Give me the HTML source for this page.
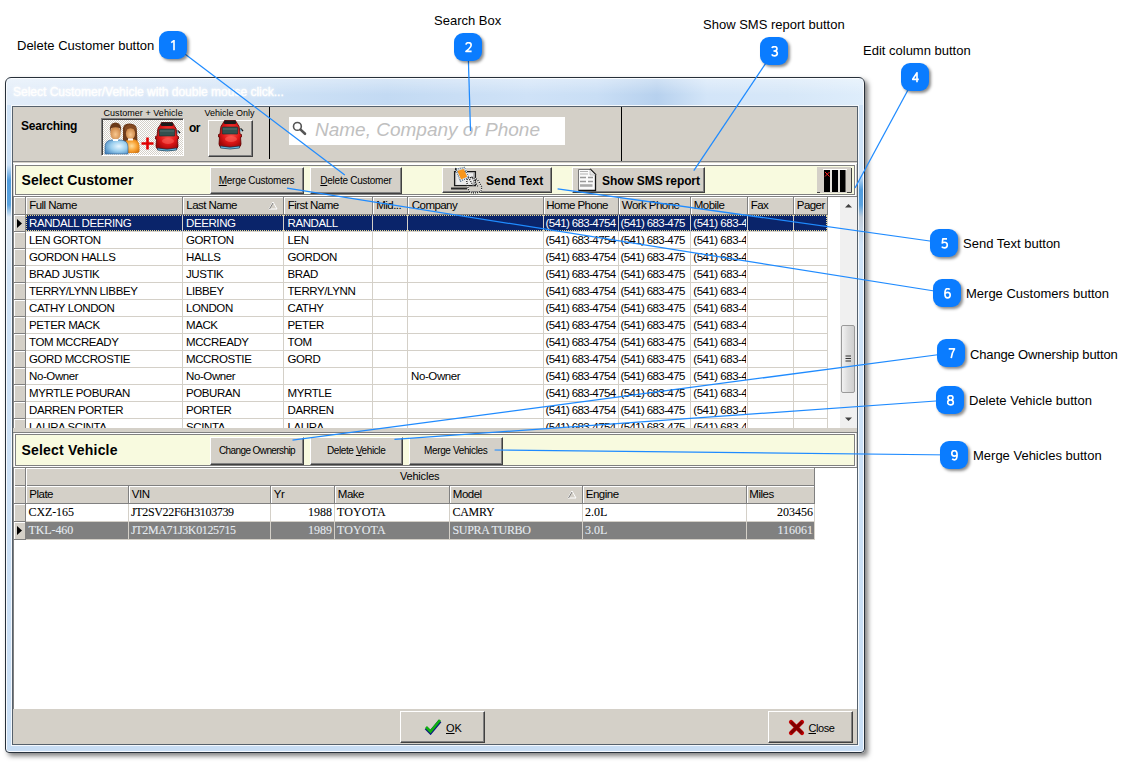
<!DOCTYPE html>
<html><head><meta charset="utf-8">
<style>
*{box-sizing:border-box;margin:0;padding:0}
html,body{width:1135px;height:762px;overflow:hidden;background:#fff;position:relative;font-family:"Liberation Sans",sans-serif}
.a{position:absolute}
.t{position:absolute;white-space:nowrap;line-height:1}
.bub{position:absolute;width:28px;height:28px;border-radius:9px;background:#0a7cff;color:#fff;font-weight:bold;font-size:13px;line-height:28px;text-align:center;box-shadow:2px 2px 3px rgba(0,0,0,.45)}
#win{left:5px;top:77px;width:860px;height:676px;border:1px solid #27303a;border-radius:6px 6px 4px 4px;
 background:linear-gradient(180deg,#dbe8f7 0px,#cfe1f5 25px,#c4dbf3 40px,#c8ddf4 100%);
 box-shadow:inset 0 0 0 1px rgba(255,255,255,.85),3px 3px 5px rgba(0,0,0,.5)}
#client{left:12px;top:106px;width:846px;height:639px;border:1px solid #56616c;background:#d4d0c8;box-shadow:0 0 0 1px rgba(255,255,255,.8)}
.btn{position:absolute;background:#d4d0c8;border-top:1px solid #fff;border-left:1px solid #fff;border-right:1px solid #404040;border-bottom:1px solid #404040;box-shadow:inset -1px -1px 0 #808080}
u{text-decoration:underline;text-underline-offset:1px}
</style></head><body>

<div id="win" class="a"></div>
<div class="a" style="left:7px;top:79px;width:856px;height:26px;border-radius:4px 4px 0 0;background:linear-gradient(90deg,#e2edf9 0px,#dbe8f8 120px,#cfe2f6 260px,#c3daf3 380px,#cfe2f7 520px,#c9def5 590px,#b7d1ee 650px,#d3e5f8 700px,#d6e7f8 780px,#deedfb 856px)"></div>
<div class="a" style="left:7px;top:79px;width:856px;height:26px;background:linear-gradient(180deg,rgba(255,255,255,.35),rgba(255,255,255,0) 60%)"></div>
<div class="a" style="left:7px;top:105px;width:4px;height:645px;background:linear-gradient(180deg,#cfe3f7 0px,#cde2f7 60px,#4f9bdc 75px,#5aa2de 100px,#dfeaf5 112px,#d8e6f3 150px,#cfe3f7 165px,#c8def5 645px)"></div>
<div class="a" style="left:858px;top:105px;width:5px;height:645px;background:linear-gradient(180deg,#cfe3f7 0px,#cfe3f7 70px,#4f9bdc 85px,#5aa2de 100px,#c0ccd8 112px,#c8d8e8 125px,#cfe3f7 140px,#c8def5 645px)"></div>
<div class="t" style="left:13.0px;top:86.14px;font-size:12px;color:#fff;-webkit-text-stroke:0.35px #fff;text-shadow:0 0 3px rgba(255,255,255,.9),0 0 6px rgba(255,255,255,.7);">Select Customer/Vehicle with double mouse click...</div>
<div id="client" class="a"></div>
<div class="t" style="left:21.0px;top:119.84px;font-size:12px;color:#000;font-weight:bold;letter-spacing:-0.2px;">Searching</div>
<div class="t" style="left:103.5px;top:109.08px;font-size:9px;color:#000;letter-spacing:0.05px;">Customer + Vehicle</div>
<div class="a" style="left:101px;top:118px;width:83px;height:38px;border-top:1px solid #808080;border-left:1px solid #808080;border-bottom:1px solid #fff;border-right:1px solid #fff;box-shadow:inset 1px 1px 0 #404040;background-color:#fff;background-image:repeating-conic-gradient(#d4d0c8 0 25%,#fff 0 50%);background-size:2px 2px"></div>
<div class="t" style="left:189.0px;top:121.84px;font-size:12px;color:#000;font-weight:bold;letter-spacing:-0.5px;">or</div>
<div class="t" style="left:204.5px;top:109.08px;font-size:9px;color:#000;letter-spacing:0px;">Vehicle Only</div>
<div class="btn" style="left:208px;top:120px;width:45px;height:37px;"></div>
<div class="a" style="left:269px;top:107px;width:1px;height:52px;background:#000;"></div>
<div class="a" style="left:621px;top:107px;width:1px;height:54px;background:#000;"></div>
<div class="a" style="left:289px;top:117px;width:276px;height:28px;background:#fff;"></div>
<div class="t" style="left:315.0px;top:119.92px;font-size:19px;color:#c0c0c0;font-style:italic;">Name, Company or Phone</div>
<div class="a" style="left:13px;top:161px;width:844px;height:1px;background:#808080;"></div>
<div class="a" style="left:13px;top:163px;width:844px;height:1px;background:#fff;"></div>
<svg class="a" style="left:100px;top:117px" width="42" height="38" viewBox="0 0 42 38">
<defs><radialGradient id="pb" cx="0.6" cy="0.45" r="0.7"><stop offset="0" stop-color="#e8f6ff"/><stop offset="0.5" stop-color="#9ccfee"/><stop offset="1" stop-color="#4a88c0"/></radialGradient>
<radialGradient id="po" cx="0.5" cy="0.5" r="0.7"><stop offset="0" stop-color="#ffe0a0"/><stop offset="0.5" stop-color="#f8a030"/><stop offset="1" stop-color="#c06000"/></radialGradient>
<radialGradient id="pf" cx="0.5" cy="0.6" r="0.6"><stop offset="0" stop-color="#f8c890"/><stop offset="1" stop-color="#c88040"/></radialGradient></defs>
<path d="M23 14 Q22 6 30 6.5 Q38 7 37 15 L37.5 25 L23 25 Z" fill="#6e3c1c"/>
<path d="M24 36 L24 29 Q24 22 31.5 22 Q39 22 39.5 29 L39.5 34 Q39 36 37 36 Z" fill="url(#po)"/>
<ellipse cx="30.5" cy="16.5" rx="4.6" ry="6" fill="url(#pf)"/>
<path d="M25 14 Q29 9 36 13 L36 10 Q30 5 25 10 Z" fill="#844a22"/>
<rect x="28" y="21.5" width="5" height="2" fill="#fff"/>
<path d="M5 37 L5 30 Q5 23 12 23 L20 23 Q28 23 28 30 L28 37 Z" fill="url(#pb)" stroke="#2e5e90" stroke-width="0.6"/>
<ellipse cx="15.5" cy="16" rx="5.2" ry="6.8" fill="url(#pf)"/>
<path d="M10 16 Q8.5 5.5 15.5 5.5 Q22.5 5.5 21 16 L20 11.5 Q15.5 9 11 11.5 Z" fill="#6a3a1a"/>
<rect x="13" y="22" width="5" height="2" fill="#fff"/>
</svg>
<svg class="a" style="left:141px;top:137px" width="13" height="13"><path d="M0.5 6.5H12.5M6.5 0.5V12.5" stroke="#e00000" stroke-width="2.6"/></svg>
<svg class="a" style="left:155px;top:122px" width="26" height="30" viewBox="0 0 26 30">
<defs><radialGradient id="cg155" cx="0.55" cy="0.45" r="0.6"><stop offset="0" stop-color="#ff5a50"/><stop offset="0.6" stop-color="#e01818"/><stop offset="1" stop-color="#a00808"/></radialGradient></defs>
<path d="M22.5 8.5 L25 11" stroke="#111" stroke-width="1.5"/><rect x="21.5" y="9.5" width="2" height="2" fill="#7cc8e8"/>
<path d="M6 1.5 Q6 0.3 8 0.3 L16 0.3 Q18 0.3 18 1.5 L19.5 4 Q21.5 6 21.5 9 L22 14 L23.5 14.5 L23.5 17 L22.5 17 L23 24 Q23 27 20 27.3 L4 27.3 Q1 27 1 24 L1.5 17 L0.5 17 L0.5 14.5 L2 14 L2.5 9 Q2.5 6 4.5 4 Z" fill="url(#cg155)" stroke="#5a0000" stroke-width="0.8"/>
<rect x="6" y="0.5" width="12" height="3.5" rx="1" fill="#1b1b1b"/>
<path d="M4 8 Q4 7 5.5 7 L18.5 7 Q20 7 20 8 L19.5 14 L4.5 14 Z" fill="#34504e" stroke="#1c2a2a" stroke-width="0.6"/>
<path d="M5 9 L19 9" stroke="#5d7a78" stroke-width="0.8"/>
<ellipse cx="13" cy="19" rx="6" ry="3" fill="#ff6a60" opacity=".5"/>
<path d="M2.5 26 Q12 28.5 21.5 26 L21.5 28 Q12 30 2.5 28 Z" fill="#68c0e8" stroke="#1a3a50" stroke-width="0.7"/>
</svg>
<svg class="a" style="left:218px;top:120px" width="26" height="30" viewBox="0 0 26 30">
<defs><radialGradient id="cg218" cx="0.55" cy="0.45" r="0.6"><stop offset="0" stop-color="#ff5a50"/><stop offset="0.6" stop-color="#e01818"/><stop offset="1" stop-color="#a00808"/></radialGradient></defs>
<path d="M22.5 8.5 L25 11" stroke="#111" stroke-width="1.5"/><rect x="21.5" y="9.5" width="2" height="2" fill="#7cc8e8"/>
<path d="M6 1.5 Q6 0.3 8 0.3 L16 0.3 Q18 0.3 18 1.5 L19.5 4 Q21.5 6 21.5 9 L22 14 L23.5 14.5 L23.5 17 L22.5 17 L23 24 Q23 27 20 27.3 L4 27.3 Q1 27 1 24 L1.5 17 L0.5 17 L0.5 14.5 L2 14 L2.5 9 Q2.5 6 4.5 4 Z" fill="url(#cg218)" stroke="#5a0000" stroke-width="0.8"/>
<rect x="6" y="0.5" width="12" height="3.5" rx="1" fill="#1b1b1b"/>
<path d="M4 8 Q4 7 5.5 7 L18.5 7 Q20 7 20 8 L19.5 14 L4.5 14 Z" fill="#34504e" stroke="#1c2a2a" stroke-width="0.6"/>
<path d="M5 9 L19 9" stroke="#5d7a78" stroke-width="0.8"/>
<ellipse cx="13" cy="19" rx="6" ry="3" fill="#ff6a60" opacity=".5"/>
<path d="M2.5 26 Q12 28.5 21.5 26 L21.5 28 Q12 30 2.5 28 Z" fill="#68c0e8" stroke="#1a3a50" stroke-width="0.7"/>
</svg>
<svg class="a" style="left:291px;top:120px" width="16" height="16"><circle cx="6.4" cy="6.4" r="3.9" fill="none" stroke="#555" stroke-width="1.6"/><path d="M9.6 9.6 L14 13.8" stroke="#555" stroke-width="2.6" stroke-linecap="round"/></svg>
<div class="a" style="left:14px;top:164px;width:842px;height:32px;border:1px solid #fff"></div>
<div class="a" style="left:15px;top:165px;width:840px;height:30px;border:1px solid #808080;background:#f8fadf"></div>
<div class="t" style="left:21.5px;top:173.15px;font-size:14px;color:#000;font-weight:bold;letter-spacing:0.1px;">Select Customer</div>
<div class="btn" style="left:210px;top:167px;width:94px;height:27px;"></div>
<div class="t" style="left:218.7px;top:175.53px;font-size:10px;color:#000;letter-spacing:-0.26px;"><u>M</u>erge Customers</div>
<div class="btn" style="left:310px;top:167px;width:92px;height:27px;"></div>
<div class="t" style="left:320.3px;top:175.53px;font-size:10px;color:#000;letter-spacing:-0.25px;"><u>D</u>elete Customer</div>
<div class="btn" style="left:442px;top:167px;width:110px;height:26px;"></div>
<div class="t" style="left:486.0px;top:174.84px;font-size:12px;color:#000;font-weight:bold;letter-spacing:0.1px;">Send Text</div>
<div class="btn" style="left:572px;top:167px;width:133px;height:26px;"></div>
<div class="t" style="left:602.0px;top:174.84px;font-size:12px;color:#000;font-weight:bold;letter-spacing:-0.1px;">Show SMS report</div>
<svg class="a" style="left:448px;top:165px" width="38" height="30" viewBox="0 0 38 30">
<path d="M6.6 6.6 H27.4 V20.6 H6.6 Z" fill="#d8d8d8" stroke="#1a1a1a" stroke-width="1.3"/>
<rect x="8.5" y="8.5" width="17" height="11" fill="#ececec"/>
<path d="M26 8 V20" stroke="#999" stroke-width="1.2"/>
<path d="M3 23.5 H19.3" stroke="#2a2a2a" stroke-width="2"/>
<path d="M9.3 5.9 L15.7 4.1 L19.3 11.8 L13 14.6 Z" fill="#f7961c"/>
<path d="M7.8 4.3 L16.5 2.4 L20.8 12.3 L12.4 16.2 Z" fill="none" stroke="#fff" stroke-width="1.3"/>
<path d="M7.8 4.3 L16.5 2.4 L20.8 12.3 L12.4 16.2 Z" fill="none" stroke="#3a5a7a" stroke-width="1.3" stroke-dasharray="1 1"/>
<path d="M8 3 L7.5 5" stroke="#111" stroke-width="1.3"/>
<g fill="none" stroke-width="1.2">
<path d="M18.8 15 Q20.5 12.3 22.5 12.6 L26.5 13 Q29 14 31 17 L33.6 21.5 Q34 26.5 30 27.6 L24.5 28 Q21 27.3 20 23 L18.8 17 Z M20.5 12.3 L25.2 20.8 M23.6 11.6 L29.9 21.5" stroke="#fff"/>
<path d="M18.8 15 Q20.5 12.3 22.5 12.6 L26.5 13 Q29 14 31 17 L33.6 21.5 Q34 26.5 30 27.6 L24.5 28 Q21 27.3 20 23 L18.8 17 Z M20.5 12.3 L25.2 20.8 M23.6 11.6 L29.9 21.5" stroke="#111" stroke-dasharray="1.1 1"/>
</g>
</svg>
<svg class="a" style="left:577px;top:168px" width="20" height="24" viewBox="0 0 20 24">
<path d="M1.5 1.5 H13 L18.5 7 V22.5 H1.5 Z" fill="#fafafa" stroke="#777" stroke-width="1"/>
<path d="M13 1 L19 7" stroke="#111" stroke-width="1.6"/>
<path d="M1.5 22.5 H18.5 V7" fill="none" stroke="#111" stroke-width="1.3"/>
<path d="M13 1.5 V7 H18.5" fill="#e8e8e8" stroke="#aaa" stroke-width="0.6"/>
<path d="M3 3.5 H11 M3 6 H11" stroke="#aaa" stroke-width="0.9"/>
<path d="M3 9.5 H9 M11 9.5 H16 M3 13.5 H9 M11 13.5 H16" stroke="#999" stroke-width="1.6"/>
<path d="M3 17.5 H15.5" stroke="#aaa" stroke-width="2.6"/>
</svg>
<svg class="a" style="left:817px;top:167px" width="35" height="26" viewBox="0 0 35 26">
<rect x="0" y="0" width="34" height="26" fill="#d4d0c8"/>
<path d="M34.5 1 V25.5" stroke="#404040" stroke-width="1"/>
<path d="M30 25.5 H34.5 M0 25.5 H3" stroke="#404040" stroke-width="1"/>
<rect x="6" y="2" width="24" height="1.2" fill="#fff"/>
<rect x="13" y="3" width="2" height="22" fill="#e6e3dc"/><rect x="21" y="3" width="2" height="22" fill="#e6e3dc"/>
<rect x="7" y="3" width="6" height="22" fill="#000"/><rect x="15" y="3" width="6" height="22" fill="#000"/><rect x="23" y="3" width="5.5" height="22" fill="#000"/>
<path d="M8 5 L12.5 9.5 M12.5 5 L8 9.5" stroke="#ff2020" stroke-width="1"/>
</svg>
<div class="a" style="left:13px;top:196px;width:844px;height:232px;background:#fff;"></div>
<div class="a" style="left:13px;top:196px;width:844px;height:1px;background:#808080;"></div>
<div class="a" style="left:13px;top:196px;width:1px;height:232px;background:#808080;"></div>
<div class="a" style="left:14px;top:197px;width:814px;height:17px;background:#d4d0c8;"></div>
<div class="a" style="left:14px;top:214px;width:814px;height:1px;background:#808080;"></div>
<div class="a" style="left:14px;top:197px;width:814px;height:1px;background:#fff;"></div>
<div class="a" style="left:14px;top:197px;width:1px;height:17px;background:#fff;"></div>
<div class="a" style="left:25px;top:197px;width:1px;height:17px;background:#808080;"></div>
<div class="a" style="left:26px;top:197px;width:1px;height:17px;background:#fff;"></div>
<div class="a" style="left:182px;top:197px;width:1px;height:17px;background:#808080;"></div>
<div class="a" style="left:183px;top:197px;width:1px;height:17px;background:#fff;"></div>
<div class="a" style="left:283px;top:197px;width:1px;height:17px;background:#808080;"></div>
<div class="a" style="left:284px;top:197px;width:1px;height:17px;background:#fff;"></div>
<div class="a" style="left:372px;top:197px;width:1px;height:17px;background:#808080;"></div>
<div class="a" style="left:373px;top:197px;width:1px;height:17px;background:#fff;"></div>
<div class="a" style="left:407px;top:197px;width:1px;height:17px;background:#808080;"></div>
<div class="a" style="left:408px;top:197px;width:1px;height:17px;background:#fff;"></div>
<div class="a" style="left:543px;top:197px;width:1px;height:17px;background:#808080;"></div>
<div class="a" style="left:544px;top:197px;width:1px;height:17px;background:#fff;"></div>
<div class="a" style="left:618px;top:197px;width:1px;height:17px;background:#808080;"></div>
<div class="a" style="left:619px;top:197px;width:1px;height:17px;background:#fff;"></div>
<div class="a" style="left:690px;top:197px;width:1px;height:17px;background:#808080;"></div>
<div class="a" style="left:691px;top:197px;width:1px;height:17px;background:#fff;"></div>
<div class="a" style="left:747px;top:197px;width:1px;height:17px;background:#808080;"></div>
<div class="a" style="left:748px;top:197px;width:1px;height:17px;background:#fff;"></div>
<div class="a" style="left:793px;top:197px;width:1px;height:17px;background:#808080;"></div>
<div class="a" style="left:794px;top:197px;width:1px;height:17px;background:#fff;"></div>
<div class="a" style="left:827px;top:197px;width:1px;height:17px;background:#808080;"></div>
<div class="t" style="left:29.3px;top:200.17px;font-size:11.5px;color:#000;letter-spacing:-0.55px;">Full Name</div>
<div class="t" style="left:186.3px;top:200.17px;font-size:11.5px;color:#000;letter-spacing:-0.55px;">Last Name</div>
<div class="t" style="left:287.8px;top:200.17px;font-size:11.5px;color:#000;letter-spacing:-0.55px;">First Name</div>
<div class="t" style="left:376.3px;top:200.17px;font-size:11.5px;color:#000;letter-spacing:-0.55px;">Mid...</div>
<div class="t" style="left:411.8px;top:200.17px;font-size:11.5px;color:#000;letter-spacing:-0.55px;">Company</div>
<div class="t" style="left:546.3px;top:200.17px;font-size:11.5px;color:#000;letter-spacing:-0.55px;">Home Phone</div>
<div class="t" style="left:621.8px;top:200.17px;font-size:11.5px;color:#000;letter-spacing:-0.55px;">Work Phone</div>
<div class="t" style="left:693.8px;top:200.17px;font-size:11.5px;color:#000;letter-spacing:-0.55px;">Mobile</div>
<div class="t" style="left:750.8px;top:200.17px;font-size:11.5px;color:#000;letter-spacing:-0.55px;">Fax</div>
<div class="t" style="left:796.8px;top:200.17px;font-size:11.5px;color:#000;letter-spacing:-0.55px;">Pager</div>
<svg class="a" style="left:268px;top:201px" width="10" height="9"><path d="M1 8 L5 1 L9 8 Z" fill="none" stroke="#fff" stroke-width="1"/><path d="M1.5 8 L5 2" stroke="#808080" stroke-width="1"/></svg>
<div class="a" style="left:0;top:215px;width:840px;height:213px;overflow:hidden">
<div class="a" style="left:14px;top:0px;width:11px;height:16px;background:#d4d0c8;"></div>
<div class="a" style="left:14px;top:0px;width:11px;height:1px;background:#fff;"></div>
<div class="a" style="left:14px;top:0px;width:1px;height:16px;background:#fff;"></div>
<div class="a" style="left:14px;top:16px;width:12px;height:1px;background:#808080;"></div>
<div class="a" style="left:25px;top:0px;width:1px;height:16px;background:#808080;"></div>
<div class="a" style="left:26px;top:16px;width:802px;height:1px;background:#d4d0c8;"></div>
<div class="a" style="left:26px;top:0px;width:801px;height:16px;background:#0a246a;"></div>
<div class="a" style="left:26px;top:0px;width:801px;height:16px;background:transparent;outline:1px dotted #e8d890;outline-offset:-1px"></div>
<div class="t" style="left:29.0px;top:2.57px;font-size:11.5px;color:#fff;letter-spacing:-0.4px;">RANDALL DEERING</div>
<div class="t" style="left:186.0px;top:2.57px;font-size:11.5px;color:#fff;letter-spacing:-0.4px;">DEERING</div>
<div class="t" style="left:287.5px;top:2.57px;font-size:11.5px;color:#fff;letter-spacing:-0.4px;">RANDALL</div>
<div class="a" style="left:544px;top:0px;width:74px;height:16px;overflow:hidden">
<div class="t" style="left:1.5px;top:2.57px;font-size:11.5px;color:#fff;letter-spacing:-0.62px;">(541) 683-4754</div>
</div>
<div class="a" style="left:619px;top:0px;width:71px;height:16px;overflow:hidden">
<div class="t" style="left:1.5px;top:2.57px;font-size:11.5px;color:#fff;letter-spacing:-0.62px;">(541) 683-475</div>
</div>
<div class="a" style="left:691px;top:0px;width:55px;height:16px;overflow:hidden">
<div class="t" style="left:2.3px;top:2.57px;font-size:11.5px;color:#fff;letter-spacing:-0.5px;">(541) 683-4754</div>
</div>
<div class="a" style="left:14px;top:17px;width:11px;height:16px;background:#d4d0c8;"></div>
<div class="a" style="left:14px;top:17px;width:11px;height:1px;background:#fff;"></div>
<div class="a" style="left:14px;top:17px;width:1px;height:16px;background:#fff;"></div>
<div class="a" style="left:14px;top:33px;width:12px;height:1px;background:#808080;"></div>
<div class="a" style="left:25px;top:17px;width:1px;height:16px;background:#808080;"></div>
<div class="a" style="left:26px;top:33px;width:802px;height:1px;background:#d4d0c8;"></div>
<div class="t" style="left:29.0px;top:19.57px;font-size:11.5px;color:#000;letter-spacing:-0.4px;">LEN GORTON</div>
<div class="t" style="left:186.0px;top:19.57px;font-size:11.5px;color:#000;letter-spacing:-0.4px;">GORTON</div>
<div class="t" style="left:287.5px;top:19.57px;font-size:11.5px;color:#000;letter-spacing:-0.4px;">LEN</div>
<div class="a" style="left:544px;top:17px;width:74px;height:16px;overflow:hidden">
<div class="t" style="left:1.5px;top:2.57px;font-size:11.5px;color:#000;letter-spacing:-0.62px;">(541) 683-4754</div>
</div>
<div class="a" style="left:619px;top:17px;width:71px;height:16px;overflow:hidden">
<div class="t" style="left:1.5px;top:2.57px;font-size:11.5px;color:#000;letter-spacing:-0.62px;">(541) 683-475</div>
</div>
<div class="a" style="left:691px;top:17px;width:55px;height:16px;overflow:hidden">
<div class="t" style="left:2.3px;top:2.57px;font-size:11.5px;color:#000;letter-spacing:-0.5px;">(541) 683-4754</div>
</div>
<div class="a" style="left:14px;top:34px;width:11px;height:16px;background:#d4d0c8;"></div>
<div class="a" style="left:14px;top:34px;width:11px;height:1px;background:#fff;"></div>
<div class="a" style="left:14px;top:34px;width:1px;height:16px;background:#fff;"></div>
<div class="a" style="left:14px;top:50px;width:12px;height:1px;background:#808080;"></div>
<div class="a" style="left:25px;top:34px;width:1px;height:16px;background:#808080;"></div>
<div class="a" style="left:26px;top:50px;width:802px;height:1px;background:#d4d0c8;"></div>
<div class="t" style="left:29.0px;top:36.57px;font-size:11.5px;color:#000;letter-spacing:-0.4px;">GORDON HALLS</div>
<div class="t" style="left:186.0px;top:36.57px;font-size:11.5px;color:#000;letter-spacing:-0.4px;">HALLS</div>
<div class="t" style="left:287.5px;top:36.57px;font-size:11.5px;color:#000;letter-spacing:-0.4px;">GORDON</div>
<div class="a" style="left:544px;top:34px;width:74px;height:16px;overflow:hidden">
<div class="t" style="left:1.5px;top:2.57px;font-size:11.5px;color:#000;letter-spacing:-0.62px;">(541) 683-4754</div>
</div>
<div class="a" style="left:619px;top:34px;width:71px;height:16px;overflow:hidden">
<div class="t" style="left:1.5px;top:2.57px;font-size:11.5px;color:#000;letter-spacing:-0.62px;">(541) 683-475</div>
</div>
<div class="a" style="left:691px;top:34px;width:55px;height:16px;overflow:hidden">
<div class="t" style="left:2.3px;top:2.57px;font-size:11.5px;color:#000;letter-spacing:-0.5px;">(541) 683-4754</div>
</div>
<div class="a" style="left:14px;top:51px;width:11px;height:16px;background:#d4d0c8;"></div>
<div class="a" style="left:14px;top:51px;width:11px;height:1px;background:#fff;"></div>
<div class="a" style="left:14px;top:51px;width:1px;height:16px;background:#fff;"></div>
<div class="a" style="left:14px;top:67px;width:12px;height:1px;background:#808080;"></div>
<div class="a" style="left:25px;top:51px;width:1px;height:16px;background:#808080;"></div>
<div class="a" style="left:26px;top:67px;width:802px;height:1px;background:#d4d0c8;"></div>
<div class="t" style="left:29.0px;top:53.57px;font-size:11.5px;color:#000;letter-spacing:-0.4px;">BRAD JUSTIK</div>
<div class="t" style="left:186.0px;top:53.57px;font-size:11.5px;color:#000;letter-spacing:-0.4px;">JUSTIK</div>
<div class="t" style="left:287.5px;top:53.57px;font-size:11.5px;color:#000;letter-spacing:-0.4px;">BRAD</div>
<div class="a" style="left:544px;top:51px;width:74px;height:16px;overflow:hidden">
<div class="t" style="left:1.5px;top:2.57px;font-size:11.5px;color:#000;letter-spacing:-0.62px;">(541) 683-4754</div>
</div>
<div class="a" style="left:619px;top:51px;width:71px;height:16px;overflow:hidden">
<div class="t" style="left:1.5px;top:2.57px;font-size:11.5px;color:#000;letter-spacing:-0.62px;">(541) 683-475</div>
</div>
<div class="a" style="left:691px;top:51px;width:55px;height:16px;overflow:hidden">
<div class="t" style="left:2.3px;top:2.57px;font-size:11.5px;color:#000;letter-spacing:-0.5px;">(541) 683-4754</div>
</div>
<div class="a" style="left:14px;top:68px;width:11px;height:16px;background:#d4d0c8;"></div>
<div class="a" style="left:14px;top:68px;width:11px;height:1px;background:#fff;"></div>
<div class="a" style="left:14px;top:68px;width:1px;height:16px;background:#fff;"></div>
<div class="a" style="left:14px;top:84px;width:12px;height:1px;background:#808080;"></div>
<div class="a" style="left:25px;top:68px;width:1px;height:16px;background:#808080;"></div>
<div class="a" style="left:26px;top:84px;width:802px;height:1px;background:#d4d0c8;"></div>
<div class="t" style="left:29.0px;top:70.57px;font-size:11.5px;color:#000;letter-spacing:-0.4px;">TERRY/LYNN LIBBEY</div>
<div class="t" style="left:186.0px;top:70.57px;font-size:11.5px;color:#000;letter-spacing:-0.4px;">LIBBEY</div>
<div class="t" style="left:287.5px;top:70.57px;font-size:11.5px;color:#000;letter-spacing:-0.4px;">TERRY/LYNN</div>
<div class="a" style="left:544px;top:68px;width:74px;height:16px;overflow:hidden">
<div class="t" style="left:1.5px;top:2.57px;font-size:11.5px;color:#000;letter-spacing:-0.62px;">(541) 683-4754</div>
</div>
<div class="a" style="left:619px;top:68px;width:71px;height:16px;overflow:hidden">
<div class="t" style="left:1.5px;top:2.57px;font-size:11.5px;color:#000;letter-spacing:-0.62px;">(541) 683-475</div>
</div>
<div class="a" style="left:691px;top:68px;width:55px;height:16px;overflow:hidden">
<div class="t" style="left:2.3px;top:2.57px;font-size:11.5px;color:#000;letter-spacing:-0.5px;">(541) 683-4754</div>
</div>
<div class="a" style="left:14px;top:85px;width:11px;height:16px;background:#d4d0c8;"></div>
<div class="a" style="left:14px;top:85px;width:11px;height:1px;background:#fff;"></div>
<div class="a" style="left:14px;top:85px;width:1px;height:16px;background:#fff;"></div>
<div class="a" style="left:14px;top:101px;width:12px;height:1px;background:#808080;"></div>
<div class="a" style="left:25px;top:85px;width:1px;height:16px;background:#808080;"></div>
<div class="a" style="left:26px;top:101px;width:802px;height:1px;background:#d4d0c8;"></div>
<div class="t" style="left:29.0px;top:87.57px;font-size:11.5px;color:#000;letter-spacing:-0.4px;">CATHY LONDON</div>
<div class="t" style="left:186.0px;top:87.57px;font-size:11.5px;color:#000;letter-spacing:-0.4px;">LONDON</div>
<div class="t" style="left:287.5px;top:87.57px;font-size:11.5px;color:#000;letter-spacing:-0.4px;">CATHY</div>
<div class="a" style="left:544px;top:85px;width:74px;height:16px;overflow:hidden">
<div class="t" style="left:1.5px;top:2.57px;font-size:11.5px;color:#000;letter-spacing:-0.62px;">(541) 683-4754</div>
</div>
<div class="a" style="left:619px;top:85px;width:71px;height:16px;overflow:hidden">
<div class="t" style="left:1.5px;top:2.57px;font-size:11.5px;color:#000;letter-spacing:-0.62px;">(541) 683-475</div>
</div>
<div class="a" style="left:691px;top:85px;width:55px;height:16px;overflow:hidden">
<div class="t" style="left:2.3px;top:2.57px;font-size:11.5px;color:#000;letter-spacing:-0.5px;">(541) 683-4754</div>
</div>
<div class="a" style="left:14px;top:102px;width:11px;height:16px;background:#d4d0c8;"></div>
<div class="a" style="left:14px;top:102px;width:11px;height:1px;background:#fff;"></div>
<div class="a" style="left:14px;top:102px;width:1px;height:16px;background:#fff;"></div>
<div class="a" style="left:14px;top:118px;width:12px;height:1px;background:#808080;"></div>
<div class="a" style="left:25px;top:102px;width:1px;height:16px;background:#808080;"></div>
<div class="a" style="left:26px;top:118px;width:802px;height:1px;background:#d4d0c8;"></div>
<div class="t" style="left:29.0px;top:104.57px;font-size:11.5px;color:#000;letter-spacing:-0.4px;">PETER MACK</div>
<div class="t" style="left:186.0px;top:104.57px;font-size:11.5px;color:#000;letter-spacing:-0.4px;">MACK</div>
<div class="t" style="left:287.5px;top:104.57px;font-size:11.5px;color:#000;letter-spacing:-0.4px;">PETER</div>
<div class="a" style="left:544px;top:102px;width:74px;height:16px;overflow:hidden">
<div class="t" style="left:1.5px;top:2.57px;font-size:11.5px;color:#000;letter-spacing:-0.62px;">(541) 683-4754</div>
</div>
<div class="a" style="left:619px;top:102px;width:71px;height:16px;overflow:hidden">
<div class="t" style="left:1.5px;top:2.57px;font-size:11.5px;color:#000;letter-spacing:-0.62px;">(541) 683-475</div>
</div>
<div class="a" style="left:691px;top:102px;width:55px;height:16px;overflow:hidden">
<div class="t" style="left:2.3px;top:2.57px;font-size:11.5px;color:#000;letter-spacing:-0.5px;">(541) 683-4754</div>
</div>
<div class="a" style="left:14px;top:119px;width:11px;height:16px;background:#d4d0c8;"></div>
<div class="a" style="left:14px;top:119px;width:11px;height:1px;background:#fff;"></div>
<div class="a" style="left:14px;top:119px;width:1px;height:16px;background:#fff;"></div>
<div class="a" style="left:14px;top:135px;width:12px;height:1px;background:#808080;"></div>
<div class="a" style="left:25px;top:119px;width:1px;height:16px;background:#808080;"></div>
<div class="a" style="left:26px;top:135px;width:802px;height:1px;background:#d4d0c8;"></div>
<div class="t" style="left:29.0px;top:121.57px;font-size:11.5px;color:#000;letter-spacing:-0.4px;">TOM MCCREADY</div>
<div class="t" style="left:186.0px;top:121.57px;font-size:11.5px;color:#000;letter-spacing:-0.4px;">MCCREADY</div>
<div class="t" style="left:287.5px;top:121.57px;font-size:11.5px;color:#000;letter-spacing:-0.4px;">TOM</div>
<div class="a" style="left:544px;top:119px;width:74px;height:16px;overflow:hidden">
<div class="t" style="left:1.5px;top:2.57px;font-size:11.5px;color:#000;letter-spacing:-0.62px;">(541) 683-4754</div>
</div>
<div class="a" style="left:619px;top:119px;width:71px;height:16px;overflow:hidden">
<div class="t" style="left:1.5px;top:2.57px;font-size:11.5px;color:#000;letter-spacing:-0.62px;">(541) 683-475</div>
</div>
<div class="a" style="left:691px;top:119px;width:55px;height:16px;overflow:hidden">
<div class="t" style="left:2.3px;top:2.57px;font-size:11.5px;color:#000;letter-spacing:-0.5px;">(541) 683-4754</div>
</div>
<div class="a" style="left:14px;top:136px;width:11px;height:16px;background:#d4d0c8;"></div>
<div class="a" style="left:14px;top:136px;width:11px;height:1px;background:#fff;"></div>
<div class="a" style="left:14px;top:136px;width:1px;height:16px;background:#fff;"></div>
<div class="a" style="left:14px;top:152px;width:12px;height:1px;background:#808080;"></div>
<div class="a" style="left:25px;top:136px;width:1px;height:16px;background:#808080;"></div>
<div class="a" style="left:26px;top:152px;width:802px;height:1px;background:#d4d0c8;"></div>
<div class="t" style="left:29.0px;top:138.57px;font-size:11.5px;color:#000;letter-spacing:-0.4px;">GORD MCCROSTIE</div>
<div class="t" style="left:186.0px;top:138.57px;font-size:11.5px;color:#000;letter-spacing:-0.4px;">MCCROSTIE</div>
<div class="t" style="left:287.5px;top:138.57px;font-size:11.5px;color:#000;letter-spacing:-0.4px;">GORD</div>
<div class="a" style="left:544px;top:136px;width:74px;height:16px;overflow:hidden">
<div class="t" style="left:1.5px;top:2.57px;font-size:11.5px;color:#000;letter-spacing:-0.62px;">(541) 683-4754</div>
</div>
<div class="a" style="left:619px;top:136px;width:71px;height:16px;overflow:hidden">
<div class="t" style="left:1.5px;top:2.57px;font-size:11.5px;color:#000;letter-spacing:-0.62px;">(541) 683-475</div>
</div>
<div class="a" style="left:691px;top:136px;width:55px;height:16px;overflow:hidden">
<div class="t" style="left:2.3px;top:2.57px;font-size:11.5px;color:#000;letter-spacing:-0.5px;">(541) 683-4754</div>
</div>
<div class="a" style="left:14px;top:153px;width:11px;height:16px;background:#d4d0c8;"></div>
<div class="a" style="left:14px;top:153px;width:11px;height:1px;background:#fff;"></div>
<div class="a" style="left:14px;top:153px;width:1px;height:16px;background:#fff;"></div>
<div class="a" style="left:14px;top:169px;width:12px;height:1px;background:#808080;"></div>
<div class="a" style="left:25px;top:153px;width:1px;height:16px;background:#808080;"></div>
<div class="a" style="left:26px;top:169px;width:802px;height:1px;background:#d4d0c8;"></div>
<div class="t" style="left:29.0px;top:155.57px;font-size:11.5px;color:#000;letter-spacing:-0.4px;">No-Owner</div>
<div class="t" style="left:186.0px;top:155.57px;font-size:11.5px;color:#000;letter-spacing:-0.4px;">No-Owner</div>
<div class="t" style="left:287.5px;top:155.57px;font-size:11.5px;color:#000;letter-spacing:-0.4px;"></div>
<div class="t" style="left:411.0px;top:155.57px;font-size:11.5px;color:#000;letter-spacing:-0.4px;">No-Owner</div>
<div class="a" style="left:544px;top:153px;width:74px;height:16px;overflow:hidden">
<div class="t" style="left:1.5px;top:2.57px;font-size:11.5px;color:#000;letter-spacing:-0.62px;">(541) 683-4754</div>
</div>
<div class="a" style="left:619px;top:153px;width:71px;height:16px;overflow:hidden">
<div class="t" style="left:1.5px;top:2.57px;font-size:11.5px;color:#000;letter-spacing:-0.62px;">(541) 683-475</div>
</div>
<div class="a" style="left:691px;top:153px;width:55px;height:16px;overflow:hidden">
<div class="t" style="left:2.3px;top:2.57px;font-size:11.5px;color:#000;letter-spacing:-0.5px;">(541) 683-4754</div>
</div>
<div class="a" style="left:14px;top:170px;width:11px;height:16px;background:#d4d0c8;"></div>
<div class="a" style="left:14px;top:170px;width:11px;height:1px;background:#fff;"></div>
<div class="a" style="left:14px;top:170px;width:1px;height:16px;background:#fff;"></div>
<div class="a" style="left:14px;top:186px;width:12px;height:1px;background:#808080;"></div>
<div class="a" style="left:25px;top:170px;width:1px;height:16px;background:#808080;"></div>
<div class="a" style="left:26px;top:186px;width:802px;height:1px;background:#d4d0c8;"></div>
<div class="t" style="left:29.0px;top:172.57px;font-size:11.5px;color:#000;letter-spacing:-0.4px;">MYRTLE POBURAN</div>
<div class="t" style="left:186.0px;top:172.57px;font-size:11.5px;color:#000;letter-spacing:-0.4px;">POBURAN</div>
<div class="t" style="left:287.5px;top:172.57px;font-size:11.5px;color:#000;letter-spacing:-0.4px;">MYRTLE</div>
<div class="a" style="left:544px;top:170px;width:74px;height:16px;overflow:hidden">
<div class="t" style="left:1.5px;top:2.57px;font-size:11.5px;color:#000;letter-spacing:-0.62px;">(541) 683-4754</div>
</div>
<div class="a" style="left:619px;top:170px;width:71px;height:16px;overflow:hidden">
<div class="t" style="left:1.5px;top:2.57px;font-size:11.5px;color:#000;letter-spacing:-0.62px;">(541) 683-475</div>
</div>
<div class="a" style="left:691px;top:170px;width:55px;height:16px;overflow:hidden">
<div class="t" style="left:2.3px;top:2.57px;font-size:11.5px;color:#000;letter-spacing:-0.5px;">(541) 683-4754</div>
</div>
<div class="a" style="left:14px;top:187px;width:11px;height:16px;background:#d4d0c8;"></div>
<div class="a" style="left:14px;top:187px;width:11px;height:1px;background:#fff;"></div>
<div class="a" style="left:14px;top:187px;width:1px;height:16px;background:#fff;"></div>
<div class="a" style="left:14px;top:203px;width:12px;height:1px;background:#808080;"></div>
<div class="a" style="left:25px;top:187px;width:1px;height:16px;background:#808080;"></div>
<div class="a" style="left:26px;top:203px;width:802px;height:1px;background:#d4d0c8;"></div>
<div class="t" style="left:29.0px;top:189.57px;font-size:11.5px;color:#000;letter-spacing:-0.4px;">DARREN PORTER</div>
<div class="t" style="left:186.0px;top:189.57px;font-size:11.5px;color:#000;letter-spacing:-0.4px;">PORTER</div>
<div class="t" style="left:287.5px;top:189.57px;font-size:11.5px;color:#000;letter-spacing:-0.4px;">DARREN</div>
<div class="a" style="left:544px;top:187px;width:74px;height:16px;overflow:hidden">
<div class="t" style="left:1.5px;top:2.57px;font-size:11.5px;color:#000;letter-spacing:-0.62px;">(541) 683-4754</div>
</div>
<div class="a" style="left:619px;top:187px;width:71px;height:16px;overflow:hidden">
<div class="t" style="left:1.5px;top:2.57px;font-size:11.5px;color:#000;letter-spacing:-0.62px;">(541) 683-475</div>
</div>
<div class="a" style="left:691px;top:187px;width:55px;height:16px;overflow:hidden">
<div class="t" style="left:2.3px;top:2.57px;font-size:11.5px;color:#000;letter-spacing:-0.5px;">(541) 683-4754</div>
</div>
<div class="a" style="left:14px;top:204px;width:11px;height:16px;background:#d4d0c8;"></div>
<div class="a" style="left:14px;top:204px;width:11px;height:1px;background:#fff;"></div>
<div class="a" style="left:14px;top:204px;width:1px;height:16px;background:#fff;"></div>
<div class="a" style="left:14px;top:220px;width:12px;height:1px;background:#808080;"></div>
<div class="a" style="left:25px;top:204px;width:1px;height:16px;background:#808080;"></div>
<div class="a" style="left:26px;top:220px;width:802px;height:1px;background:#d4d0c8;"></div>
<div class="t" style="left:29.0px;top:206.57px;font-size:11.5px;color:#000;letter-spacing:-0.4px;">LAURA SCINTA</div>
<div class="t" style="left:186.0px;top:206.57px;font-size:11.5px;color:#000;letter-spacing:-0.4px;">SCINTA</div>
<div class="t" style="left:287.5px;top:206.57px;font-size:11.5px;color:#000;letter-spacing:-0.4px;">LAURA</div>
<div class="a" style="left:544px;top:204px;width:74px;height:16px;overflow:hidden">
<div class="t" style="left:1.5px;top:2.57px;font-size:11.5px;color:#000;letter-spacing:-0.62px;">(541) 683-4754</div>
</div>
<div class="a" style="left:619px;top:204px;width:71px;height:16px;overflow:hidden">
<div class="t" style="left:1.5px;top:2.57px;font-size:11.5px;color:#000;letter-spacing:-0.62px;">(541) 683-475</div>
</div>
<div class="a" style="left:691px;top:204px;width:55px;height:16px;overflow:hidden">
<div class="t" style="left:2.3px;top:2.57px;font-size:11.5px;color:#000;letter-spacing:-0.5px;">(541) 683-4754</div>
</div>
<div class="a" style="left:182px;top:0px;width:1px;height:213px;background:#d4d0c8;"></div>
<div class="a" style="left:283px;top:0px;width:1px;height:213px;background:#d4d0c8;"></div>
<div class="a" style="left:372px;top:0px;width:1px;height:213px;background:#d4d0c8;"></div>
<div class="a" style="left:407px;top:0px;width:1px;height:213px;background:#d4d0c8;"></div>
<div class="a" style="left:543px;top:0px;width:1px;height:213px;background:#d4d0c8;"></div>
<div class="a" style="left:618px;top:0px;width:1px;height:213px;background:#d4d0c8;"></div>
<div class="a" style="left:690px;top:0px;width:1px;height:213px;background:#d4d0c8;"></div>
<div class="a" style="left:747px;top:0px;width:1px;height:213px;background:#d4d0c8;"></div>
<div class="a" style="left:793px;top:0px;width:1px;height:213px;background:#d4d0c8;"></div>
<div class="a" style="left:827px;top:0px;width:1px;height:213px;background:#d4d0c8;"></div>
</div>
<svg class="a" style="left:16px;top:218px" width="8" height="11"><path d="M1 1 L6 5.5 L1 10 Z" fill="#000"/></svg>
<div class="a" style="left:840px;top:197px;width:17px;height:231px;background:#f0f0f0;"></div>
<div class="a" style="left:828px;top:197px;width:12px;height:231px;background:#fff;"></div>
<svg class="a" style="left:844px;top:202px" width="9" height="7"><path d="M1 5.5 L4.5 2 L8 5.5" fill="#404040"/></svg>
<svg class="a" style="left:844px;top:416px" width="9" height="7"><path d="M1 1.5 L4.5 5 L8 1.5" fill="#404040"/></svg>
<div class="a" style="left:841px;top:325px;width:14px;height:68px;border:1px solid #9a9a9a;border-radius:2px;background:linear-gradient(90deg,#f2f2f2,#dcdcdc 50%,#cfcfcf)"></div>
<svg class="a" style="left:843px;top:354px" width="9" height="9"><path d="M2.5 2H8M2.5 4.5H8M2.5 7H8" stroke="#333" stroke-width="1"/></svg>
<div class="a" style="left:13px;top:428px;width:844px;height:5px;background:#d4d0c8;"></div>
<div class="a" style="left:13px;top:432px;width:844px;height:1px;background:#808080;"></div>
<div class="a" style="left:14px;top:433px;width:842px;height:34px;border:1px solid #fff"></div>
<div class="a" style="left:15px;top:434px;width:840px;height:32px;border:1px solid #808080;background:#f8fadf"></div>
<div class="t" style="left:21.5px;top:442.75px;font-size:14px;color:#000;font-weight:bold;letter-spacing:0.2px;">Select Vehicle</div>
<div class="btn" style="left:210px;top:437px;width:94px;height:28px;"></div>
<div class="t" style="left:219.0px;top:445.54px;font-size:10px;color:#000;letter-spacing:-0.6px;">Change Ownership</div>
<div class="btn" style="left:310px;top:437px;width:93px;height:28px;"></div>
<div class="t" style="left:327.0px;top:445.54px;font-size:10px;color:#000;letter-spacing:-0.4px;">Delete <u>V</u>ehicle</div>
<div class="btn" style="left:409px;top:437px;width:94px;height:28px;"></div>
<div class="t" style="left:424.0px;top:445.54px;font-size:10px;color:#000;letter-spacing:-0.36px;">Merge Vehicles</div>
<div class="a" style="left:13px;top:467px;width:844px;height:242px;background:#fff;"></div>
<div class="a" style="left:13px;top:467px;width:844px;height:1px;background:#808080;"></div>
<div class="a" style="left:13px;top:467px;width:1px;height:242px;background:#808080;"></div>
<div class="a" style="left:14px;top:468px;width:800px;height:18px;background:#d4d0c8;"></div>
<div class="a" style="left:14px;top:468px;width:800px;height:1px;background:#fff;"></div>
<div class="a" style="left:14px;top:485px;width:801px;height:1px;background:#808080;"></div>
<div class="a" style="left:14px;top:468px;width:1px;height:18px;background:#fff;"></div>
<div class="a" style="left:25px;top:468px;width:1px;height:18px;background:#808080;"></div>
<div class="a" style="left:26px;top:468px;width:1px;height:18px;background:#fff;"></div>
<div class="a" style="left:814px;top:468px;width:1px;height:18px;background:#808080;"></div>
<div class="t" style="left:400.0px;top:471.19px;font-size:11px;color:#000;letter-spacing:-0.2px;">Vehicles</div>
<div class="a" style="left:14px;top:486px;width:800px;height:17px;background:#d4d0c8;"></div>
<div class="a" style="left:14px;top:486px;width:800px;height:1px;background:#fff;"></div>
<div class="a" style="left:14px;top:503px;width:801px;height:1px;background:#808080;"></div>
<div class="a" style="left:14px;top:486px;width:1px;height:17px;background:#fff;"></div>
<div class="a" style="left:25px;top:486px;width:1px;height:17px;background:#808080;"></div>
<div class="a" style="left:26px;top:486px;width:1px;height:17px;background:#fff;"></div>
<div class="a" style="left:128px;top:486px;width:1px;height:17px;background:#808080;"></div>
<div class="a" style="left:129px;top:486px;width:1px;height:17px;background:#fff;"></div>
<div class="a" style="left:270px;top:486px;width:1px;height:17px;background:#808080;"></div>
<div class="a" style="left:271px;top:486px;width:1px;height:17px;background:#fff;"></div>
<div class="a" style="left:334px;top:486px;width:1px;height:17px;background:#808080;"></div>
<div class="a" style="left:335px;top:486px;width:1px;height:17px;background:#fff;"></div>
<div class="a" style="left:449px;top:486px;width:1px;height:17px;background:#808080;"></div>
<div class="a" style="left:450px;top:486px;width:1px;height:17px;background:#fff;"></div>
<div class="a" style="left:582px;top:486px;width:1px;height:17px;background:#808080;"></div>
<div class="a" style="left:583px;top:486px;width:1px;height:17px;background:#fff;"></div>
<div class="a" style="left:746px;top:486px;width:1px;height:17px;background:#808080;"></div>
<div class="a" style="left:747px;top:486px;width:1px;height:17px;background:#fff;"></div>
<div class="a" style="left:814px;top:486px;width:1px;height:17px;background:#808080;"></div>
<div class="t" style="left:29.3px;top:489.27px;font-size:11.5px;color:#000;letter-spacing:-0.5px;">Plate</div>
<div class="t" style="left:131.8px;top:489.27px;font-size:11.5px;color:#000;letter-spacing:-0.5px;">VIN</div>
<div class="t" style="left:273.8px;top:489.27px;font-size:11.5px;color:#000;letter-spacing:-0.5px;">Yr</div>
<div class="t" style="left:337.8px;top:489.27px;font-size:11.5px;color:#000;letter-spacing:-0.5px;">Make</div>
<div class="t" style="left:452.8px;top:489.27px;font-size:11.5px;color:#000;letter-spacing:-0.5px;">Model</div>
<div class="t" style="left:585.8px;top:489.27px;font-size:11.5px;color:#000;letter-spacing:-0.5px;">Engine</div>
<div class="t" style="left:749.3px;top:489.27px;font-size:11.5px;color:#000;letter-spacing:-0.5px;">Miles</div>
<svg class="a" style="left:567px;top:490px;width:10px;height:9px" width="10" height="9"><path d="M1 8 L5 1 L9 8 Z" fill="none" stroke="#fff" stroke-width="1"/><path d="M1.5 8 L5 2" stroke="#808080" stroke-width="1"/></svg>
<div class="a" style="left:14px;top:504px;width:11px;height:17px;background:#d4d0c8;"></div>
<div class="a" style="left:14px;top:504px;width:11px;height:1px;background:#fff;"></div>
<div class="a" style="left:14px;top:504px;width:1px;height:17px;background:#fff;"></div>
<div class="a" style="left:14px;top:521px;width:12px;height:1px;background:#808080;"></div>
<div class="a" style="left:25px;top:504px;width:1px;height:17px;background:#808080;"></div>
<div class="a" style="left:26px;top:521px;width:789px;height:1px;background:#d4d0c8;"></div>
<div class="a" style="left:128px;top:504px;width:1px;height:17px;background:#d4d0c8;"></div>
<div class="a" style="left:270px;top:504px;width:1px;height:17px;background:#d4d0c8;"></div>
<div class="a" style="left:334px;top:504px;width:1px;height:17px;background:#d4d0c8;"></div>
<div class="a" style="left:449px;top:504px;width:1px;height:17px;background:#d4d0c8;"></div>
<div class="a" style="left:582px;top:504px;width:1px;height:17px;background:#d4d0c8;"></div>
<div class="a" style="left:746px;top:504px;width:1px;height:17px;background:#d4d0c8;"></div>
<div class="a" style="left:814px;top:504px;width:1px;height:17px;background:#d4d0c8;"></div>
<div class="t" style="left:28.5px;top:505.84px;font-size:12px;color:#000;letter-spacing:-0.1px;font-family:'Liberation Serif',serif;-webkit-text-stroke:0.08px #000;">CXZ-165</div>
<div class="t" style="left:131.0px;top:505.84px;font-size:12px;color:#000;letter-spacing:-0.35px;font-family:'Liberation Serif',serif;-webkit-text-stroke:0.08px #000;">JT2SV22F6H3103739</div>
<div class="t" style="left:270px;top:505.84px;width:62px;text-align:right;font-size:12px;color:#000;font-family:'Liberation Serif',serif;-webkit-text-stroke:0.08px #000">1988</div>
<div class="t" style="left:337.0px;top:505.84px;font-size:12px;color:#000;letter-spacing:0.1px;font-family:'Liberation Serif',serif;-webkit-text-stroke:0.08px #000;">TOYOTA</div>
<div class="t" style="left:452.5px;top:505.84px;font-size:12px;color:#000;letter-spacing:-0.3px;font-family:'Liberation Serif',serif;-webkit-text-stroke:0.08px #000;">CAMRY</div>
<div class="t" style="left:585.0px;top:505.84px;font-size:12px;color:#000;font-family:'Liberation Serif',serif;-webkit-text-stroke:0.08px #000;">2.0L</div>
<div class="t" style="left:746px;top:505.84px;width:67px;text-align:right;font-size:12px;color:#000;font-family:'Liberation Serif',serif;-webkit-text-stroke:0.08px #000">203456</div>
<div class="a" style="left:14px;top:522px;width:11px;height:17px;background:#d4d0c8;"></div>
<div class="a" style="left:14px;top:522px;width:11px;height:1px;background:#fff;"></div>
<div class="a" style="left:14px;top:522px;width:1px;height:17px;background:#fff;"></div>
<div class="a" style="left:14px;top:539px;width:12px;height:1px;background:#808080;"></div>
<div class="a" style="left:25px;top:522px;width:1px;height:17px;background:#808080;"></div>
<div class="a" style="left:26px;top:522px;width:788px;height:17px;background:#808080;"></div>
<div class="a" style="left:26px;top:539px;width:789px;height:1px;background:#d4d0c8;"></div>
<div class="a" style="left:128px;top:522px;width:1px;height:17px;background:#d4d0c8;"></div>
<div class="a" style="left:270px;top:522px;width:1px;height:17px;background:#d4d0c8;"></div>
<div class="a" style="left:334px;top:522px;width:1px;height:17px;background:#d4d0c8;"></div>
<div class="a" style="left:449px;top:522px;width:1px;height:17px;background:#d4d0c8;"></div>
<div class="a" style="left:582px;top:522px;width:1px;height:17px;background:#d4d0c8;"></div>
<div class="a" style="left:746px;top:522px;width:1px;height:17px;background:#d4d0c8;"></div>
<div class="a" style="left:814px;top:522px;width:1px;height:17px;background:#d4d0c8;"></div>
<div class="t" style="left:28.5px;top:523.84px;font-size:12px;color:#e6ecf2;letter-spacing:-0.1px;font-family:'Liberation Serif',serif;-webkit-text-stroke:0.08px #e6ecf2;">TKL-460</div>
<div class="t" style="left:131.0px;top:523.84px;font-size:12px;color:#e6ecf2;letter-spacing:-0.35px;font-family:'Liberation Serif',serif;-webkit-text-stroke:0.08px #e6ecf2;">JT2MA71J3K0125715</div>
<div class="t" style="left:270px;top:523.84px;width:62px;text-align:right;font-size:12px;color:#e6ecf2;font-family:'Liberation Serif',serif;-webkit-text-stroke:0.08px #e6ecf2">1989</div>
<div class="t" style="left:337.0px;top:523.84px;font-size:12px;color:#e6ecf2;letter-spacing:0.1px;font-family:'Liberation Serif',serif;-webkit-text-stroke:0.08px #e6ecf2;">TOYOTA</div>
<div class="t" style="left:452.5px;top:523.84px;font-size:12px;color:#e6ecf2;letter-spacing:-0.3px;font-family:'Liberation Serif',serif;-webkit-text-stroke:0.08px #e6ecf2;">SUPRA TURBO</div>
<div class="t" style="left:585.0px;top:523.84px;font-size:12px;color:#e6ecf2;font-family:'Liberation Serif',serif;-webkit-text-stroke:0.08px #e6ecf2;">3.0L</div>
<div class="t" style="left:746px;top:523.84px;width:67px;text-align:right;font-size:12px;color:#e6ecf2;font-family:'Liberation Serif',serif;-webkit-text-stroke:0.08px #e6ecf2">116061</div>
<svg class="a" style="left:16px;top:525px" width="8" height="11"><path d="M1 1 L6 5.5 L1 10 Z" fill="#000"/></svg>
<div class="a" style="left:13px;top:710px;width:844px;height:34px;background:#d4d0c8;"></div>
<div class="btn" style="left:400px;top:711px;width:85px;height:32px;"></div>
<div class="t" style="left:446.0px;top:723.19px;font-size:11px;color:#000;letter-spacing:0px;"><u>O</u>K</div>
<svg class="a" style="left:424px;top:718px" width="18" height="17"><path d="M2 10 L6.5 14.5 L16 3" fill="none" stroke="#0a1a80" stroke-width="3.6" stroke-linejoin="miter"/><path d="M2 9 L6.5 13.5 L16 2" fill="none" stroke="#10b010" stroke-width="2.6"/></svg>
<div class="btn" style="left:768px;top:711px;width:85px;height:32px;"></div>
<div class="t" style="left:808.5px;top:723.19px;font-size:11px;color:#000;letter-spacing:-0.45px;"><u>C</u>lose</div>
<svg class="a" style="left:788px;top:719px" width="17" height="17"><path d="M3 3 L14 14 M14 3 L3 14" stroke="#c00000" stroke-width="4.2" stroke-linecap="round"/><path d="M3 3 L14 14 M14 3 L3 14" stroke="#800000" stroke-width="3"/></svg>
<div class="t" style="left:17.0px;top:39.20px;font-size:13px;color:#000;letter-spacing:0px;">Delete Customer button</div>
<div class="t" style="left:434.0px;top:13.80px;font-size:13px;color:#000;letter-spacing:0px;">Search Box</div>
<div class="t" style="left:703.0px;top:17.70px;font-size:13px;color:#000;letter-spacing:0px;">Show SMS report button</div>
<div class="t" style="left:863.0px;top:44.00px;font-size:13px;color:#000;letter-spacing:0px;">Edit column button</div>
<div class="t" style="left:963.0px;top:236.80px;font-size:13px;color:#000;letter-spacing:0px;">Send Text button</div>
<div class="t" style="left:966.0px;top:286.90px;font-size:13px;color:#000;letter-spacing:0px;">Merge Customers button</div>
<div class="t" style="left:970.0px;top:347.50px;font-size:13px;color:#000;letter-spacing:-0.15px;">Change Ownership button</div>
<div class="t" style="left:969.0px;top:394.20px;font-size:13px;color:#000;letter-spacing:0px;">Delete Vehicle button</div>
<div class="t" style="left:973.0px;top:448.90px;font-size:13px;color:#000;letter-spacing:0px;">Merge Vehicles button</div>
<svg class="a" style="left:0;top:0" width="1135" height="762"><line x1="173" y1="45" x2="344.8" y2="175" stroke="#1f8bff" stroke-width="1.25"/><line x1="468" y1="47" x2="470.5" y2="131" stroke="#1f8bff" stroke-width="1.25"/><line x1="774" y1="51" x2="693.8" y2="170.6" stroke="#1f8bff" stroke-width="1.25"/><line x1="915" y1="77" x2="855" y2="188" stroke="#1f8bff" stroke-width="1.25"/><line x1="944" y1="243" x2="557.6" y2="188.8" stroke="#1f8bff" stroke-width="1.25"/><line x1="947" y1="293" x2="287" y2="188.1" stroke="#1f8bff" stroke-width="1.25"/><line x1="951" y1="353" x2="292.5" y2="440.1" stroke="#1f8bff" stroke-width="1.25"/><line x1="950" y1="400" x2="394.5" y2="439.3" stroke="#1f8bff" stroke-width="1.25"/><line x1="954" y1="455" x2="494.6" y2="450" stroke="#1f8bff" stroke-width="1.25"/></svg>
<div class="bub" style="left:159px;top:31px"><svg style="position:absolute;left:10.5px;top:8.8px" width="8" height="11" viewBox="0 0 8 11"><path d="M1.2 2.6 L4 0.6 V10.2" fill="none" stroke="#fff" stroke-width="1.65" stroke-linejoin="round"/></svg></div>
<div class="bub" style="left:454px;top:33px"><svg style="position:absolute;left:10.5px;top:8.8px" width="8" height="11" viewBox="0 0 8 11"><path d="M0.9 2.6 Q1.2 0.6 3.6 0.6 Q6.2 0.6 6.2 3.1 Q6.2 4.9 3.8 7 L1 9.4 H6.6" fill="none" stroke="#fff" stroke-width="1.65" stroke-linejoin="round"/></svg></div>
<div class="bub" style="left:760px;top:37px"><svg style="position:absolute;left:10.5px;top:8.8px" width="8" height="11" viewBox="0 0 8 11"><path d="M0.9 2 Q1.6 0.6 3.5 0.6 Q6 0.6 6 2.8 Q6 5 3 5 Q6.3 5 6.3 7.5 Q6.3 9.8 3.4 9.8 Q1.4 9.8 0.7 8.3" fill="none" stroke="#fff" stroke-width="1.65" stroke-linejoin="round"/></svg></div>
<div class="bub" style="left:901px;top:63px"><svg style="position:absolute;left:10.5px;top:8.8px" width="8" height="11" viewBox="0 0 8 11"><path d="M5 10.2 V0.8 L0.6 7.3 H6.8" fill="none" stroke="#fff" stroke-width="1.65" stroke-linejoin="round"/></svg></div>
<div class="bub" style="left:930px;top:229px"><svg style="position:absolute;left:10.5px;top:8.8px" width="8" height="11" viewBox="0 0 8 11"><path d="M6 0.9 H1.8 L1.3 5 Q2.2 4.2 3.5 4.2 Q6.3 4.2 6.3 7 Q6.3 9.8 3.4 9.8 Q1.5 9.8 0.8 8.6" fill="none" stroke="#fff" stroke-width="1.65" stroke-linejoin="round"/></svg></div>
<div class="bub" style="left:933px;top:279px"><svg style="position:absolute;left:10.5px;top:8.8px" width="8" height="11" viewBox="0 0 8 11"><path d="M5.8 1.6 Q5 0.6 3.6 0.6 Q0.9 0.6 0.9 5.4 Q0.9 9.8 3.5 9.8 Q6.2 9.8 6.2 7 Q6.2 4.3 3.6 4.3 Q1.6 4.3 1 6" fill="none" stroke="#fff" stroke-width="1.65" stroke-linejoin="round"/></svg></div>
<div class="bub" style="left:937px;top:339px"><svg style="position:absolute;left:10.5px;top:8.8px" width="8" height="11" viewBox="0 0 8 11"><path d="M0.7 0.9 H6.5 Q3.8 4.8 3.2 10.2" fill="none" stroke="#fff" stroke-width="1.65" stroke-linejoin="round"/></svg></div>
<div class="bub" style="left:936px;top:386px"><svg style="position:absolute;left:10.5px;top:8.8px" width="8" height="11" viewBox="0 0 8 11"><path d="M3.5 5 Q1 5 1 2.8 Q1 0.6 3.5 0.6 Q6 0.6 6 2.8 Q6 5 3.5 5 Q0.7 5 0.7 7.4 Q0.7 9.8 3.5 9.8 Q6.3 9.8 6.3 7.4 Q6.3 5 3.5 5 Z" fill="none" stroke="#fff" stroke-width="1.65" stroke-linejoin="round"/></svg></div>
<div class="bub" style="left:940px;top:441px"><svg style="position:absolute;left:10.5px;top:8.8px" width="8" height="11" viewBox="0 0 8 11"><path d="M1.2 8.8 Q2 9.8 3.4 9.8 Q6.1 9.8 6.1 5 Q6.1 0.6 3.4 0.6 Q0.8 0.6 0.8 3.3 Q0.8 6.1 3.4 6.1 Q5.4 6.1 6 4.6" fill="none" stroke="#fff" stroke-width="1.65" stroke-linejoin="round"/></svg></div>
</body></html>
